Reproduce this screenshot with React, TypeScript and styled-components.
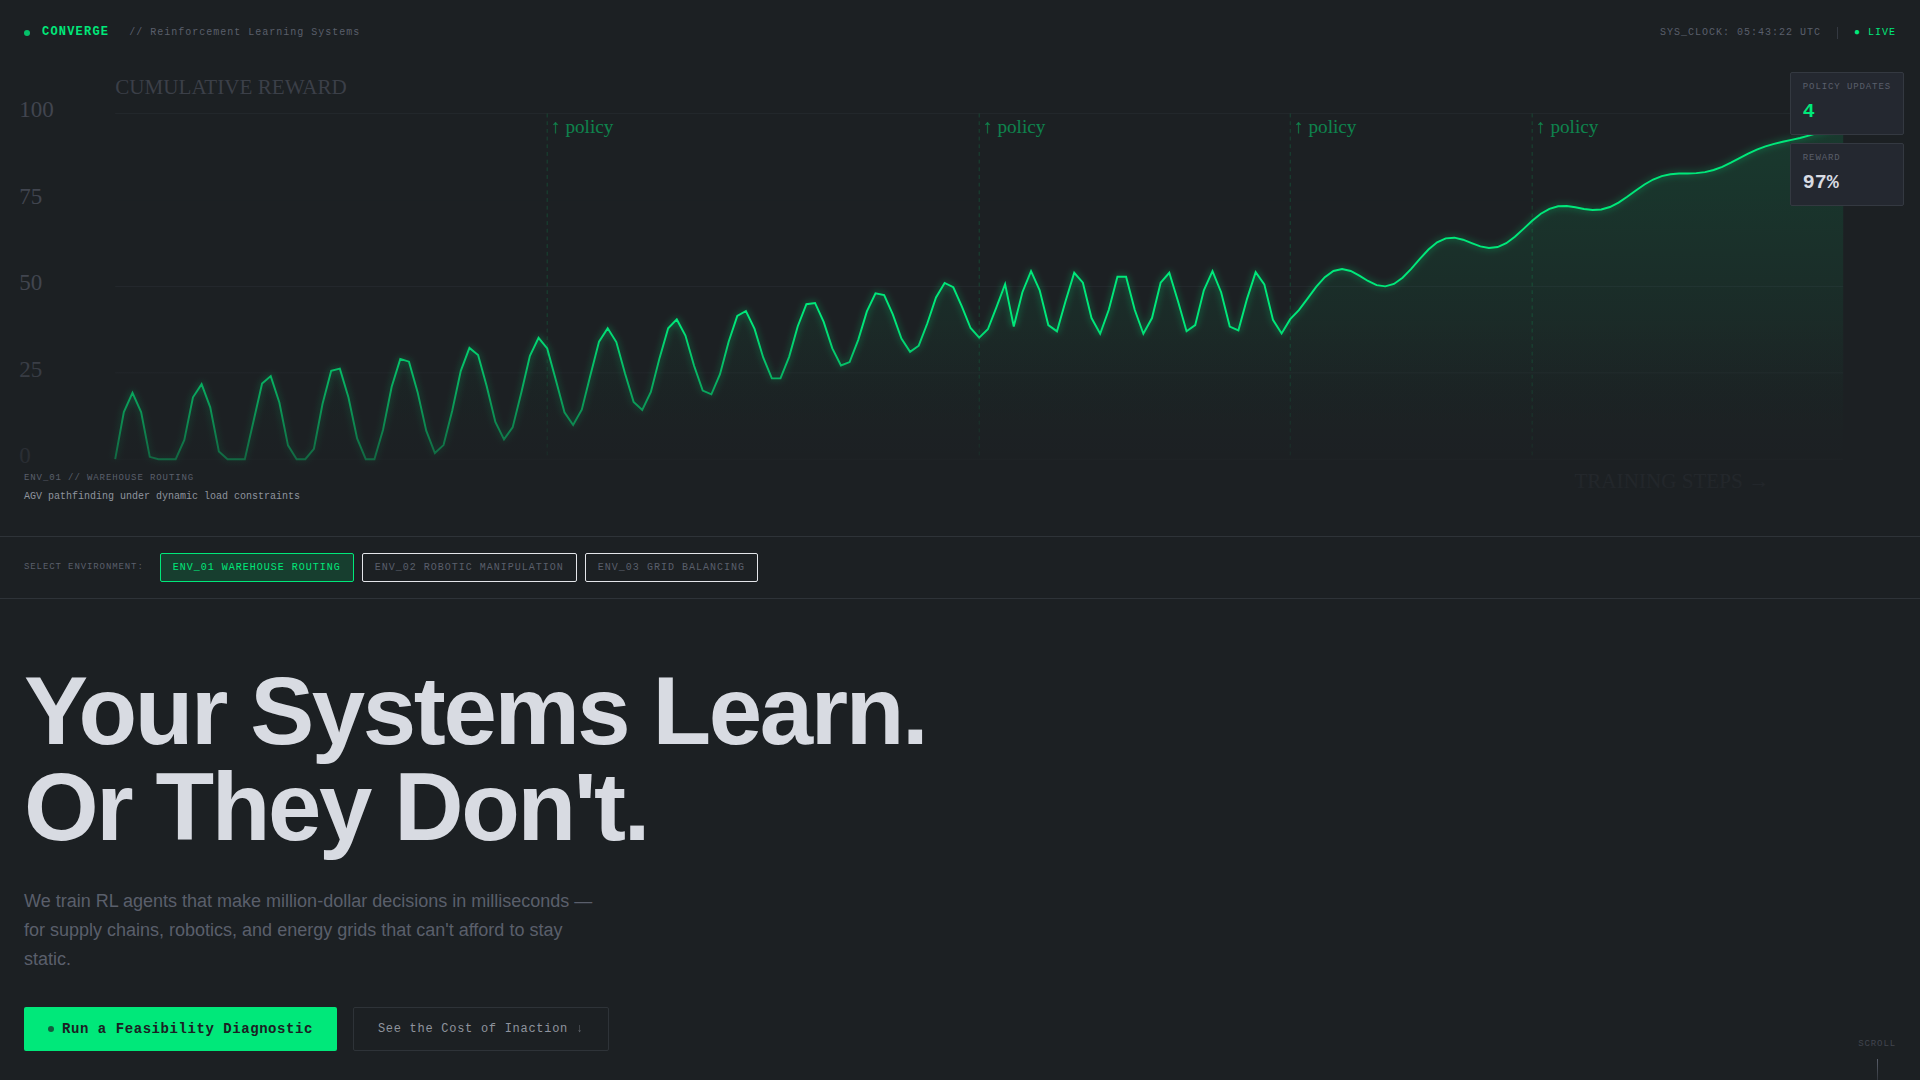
import React, { useState } from "react";
import styled, { createGlobalStyle, css } from "styled-components";

const colors = {
  bg: "#1c2023",
  panel: "#242830",
  line: "#2e3338",
  cardLine: "#343941",
  green: "#00e87a",
  text: "#d8dbe2",
  muted: "#5a5f6b",
  soft: "#8f949e",
  dim: "#41454f",
};

const mono = `"Liberation Mono", "DejaVu Sans Mono", monospace`;

const GlobalStyle = createGlobalStyle`
  *, *::before, *::after { box-sizing: border-box; }
  html, body { margin: 0; padding: 0; background: ${colors.bg}; }
  body {
    color: ${colors.text};
    font-family: "Liberation Sans", Arial, sans-serif;
  }
  h1, h2, p { margin: 0; }
`;

const Page = styled.div`
  height: 100vh;
  overflow: hidden;
  background: ${colors.bg};
`;

/* ---------- top bar ---------- */

const TopBar = styled.header`
  position: absolute;
  inset: 0 0 auto 0;
  z-index: 2;
  display: flex;
  align-items: center;
  justify-content: space-between;
  padding: 24px;
  font: 10px/17px ${mono};
  letter-spacing: 1px;
  color: ${colors.muted};
`;

const Brand = styled.div`
  display: flex;
  align-items: center;
  gap: 12px;
`;

const Dot = styled.span<{ $dark?: boolean }>`
  width: 6px;
  height: 6px;
  border-radius: 50%;
  background: ${(p) => (p.$dark ? colors.bg : colors.green)};
  opacity: ${(p) => (p.$dark ? 0.7 : 0.8)};
`;

const BrandName = styled.strong`
  font-size: 12px;
  font-weight: 700;
  letter-spacing: 0.1em;
  color: ${colors.green};
`;

const Tagline = styled.span`
  margin-left: 8px;
`;

const Status = styled.div`
  display: flex;
  align-items: center;
  gap: 16px;
`;

const Divider = styled.span`
  width: 1px;
  height: 12px;
  background: ${colors.cardLine};
`;

const Live = styled.span`
  color: ${colors.green};
`;

/* ---------- chart ---------- */

const ChartSection = styled.section`
  position: relative;
  aspect-ratio: 240 / 67;
  overflow: hidden;
`;

const ChartSvg = styled.svg`
  display: block;
  width: 100%;
  height: 100%;
  font-family: "Liberation Serif", "Times New Roman", serif;
`;

const ChartFade = styled.div`
  position: absolute;
  inset: auto 0 0 0;
  height: 40%;
  background: linear-gradient(to bottom, transparent, ${colors.bg});
`;

const Readouts = styled.div`
  position: absolute;
  top: 72px;
  right: 16px;
  display: flex;
  flex-direction: column;
  gap: 8px;
`;

const Card = styled.div`
  padding: 8px 12px;
  border: 1px solid ${colors.cardLine};
  border-radius: 2px;
  background: ${colors.panel};
  font-family: ${mono};
`;

const CardLabel = styled.div`
  margin-bottom: 4px;
  font-size: 9px;
  line-height: 12px;
  letter-spacing: 0.1em;
  color: ${colors.muted};
`;

const CardValue = styled.div<{ $accent?: boolean }>`
  font-size: 20px;
  line-height: 29px;
  font-weight: 700;
  color: ${(p) => (p.$accent ? colors.green : colors.text)};
`;

const EnvCaption = styled.div`
  position: absolute;
  left: 24px;
  bottom: 32px;
  font: 10px/14px ${mono};
  color: ${colors.soft};
`;

const EnvCode = styled.div`
  margin-bottom: 4px;
  font-size: 9px;
  line-height: 16px;
  letter-spacing: 0.1em;
  color: ${colors.muted};
`;

/* ---------- environment selector ---------- */

const Selector = styled.nav`
  display: flex;
  align-items: center;
  gap: 8px;
  padding: 16px 24px;
  border-top: 1px solid ${colors.line};
  border-bottom: 1px solid ${colors.line};
  font-family: ${mono};
`;

const SelectorLabel = styled.span`
  margin-right: 8px;
  font-size: 9px;
  line-height: 13px;
  letter-spacing: 0.1em;
  color: ${colors.muted};
`;

const Tab = styled.button<{ $active: boolean }>`
  padding: 8px 12px;
  border: 1px solid #e4e6ea;
  border-radius: 2px;
  background: transparent;
  color: ${colors.muted};
  font: 10px/11px ${mono};
  letter-spacing: 0.1em;
  cursor: pointer;
  ${(p) =>
    p.$active &&
    css`
      border-color: ${colors.green};
      background: rgba(0, 232, 122, 0.15);
      color: ${colors.green};
    `}
`;

/* ---------- hero ---------- */

const Hero = styled.section`
  position: relative;
  padding: 64px 24px;
`;

const Headline = styled.h1`
  margin-bottom: 32px;
  font-size: 96px;
  line-height: 96px;
  font-weight: 700;
  letter-spacing: -0.025em;
`;

const Lead = styled.p`
  max-width: 576px;
  min-height: 88px;
  margin-bottom: 32px;
  font-size: 18px;
  line-height: 29px;
  color: ${colors.muted};
`;

const Actions = styled.div`
  display: flex;
  gap: 16px;
`;

const Action = styled.a<{ $primary?: boolean }>`
  display: flex;
  align-items: center;
  gap: 8px;
  min-height: 44px;
  padding: 0 24px;
  border: 1px solid ${colors.line};
  border-radius: 2px;
  color: ${colors.soft};
  font: 12px/16px ${mono};
  letter-spacing: 0.06em;
  text-decoration: none;
  ${(p) =>
    p.$primary &&
    css`
      border: 0;
      background: ${colors.green};
      color: ${colors.bg};
      font-size: 14px;
      font-weight: 700;
      letter-spacing: 0.04em;
    `}
`;

const Arrow = styled.span`
  opacity: 0.6;
`;

const ScrollHint = styled.div`
  position: absolute;
  right: 24px;
  bottom: 24px;
  display: flex;
  flex-direction: column;
  align-items: center;
  gap: 8px;
  font: 9px/14px ${mono};
  letter-spacing: 0.1em;
  color: ${colors.dim};
`;

const ScrollLine = styled.span`
  width: 1px;
  height: 32px;
  background: linear-gradient(to bottom, ${colors.muted}, transparent);
`;

/* ---------- chart data ---------- */

const STEPS = 200;
const policySteps = [50, 100, 136, 164];

function reward(i: number): number {
  let v: number;
  if (i < 104) v = 0.438 * i + (18.5 - 0.098 * i) * Math.sin(0.8 * i);
  else if (i < 136) v = 45.3 + 9.1 * Math.sin(1.2 * i);
  else v = 52.3 + 0.806 * (i - 144.5) + Math.max(0, 5.5 - 0.086 * (i - 136)) * Math.sin(0.5 * i);
  return Math.max(0, Math.min(100, v));
}

const toX = (i: number) => 60 + (i * 900) / STEPS;
const toY = (v: number) => 240 - v * 1.8;

const curve = Array.from({ length: STEPS + 1 }, (_, i) => `${toX(i).toFixed(2)},${toY(reward(i)).toFixed(2)}`);
const linePath = `M${curve.join("L")}`;
const areaPath = `${linePath}L960,240L60,240Z`;

function RewardChart() {
  return (
    <ChartSvg viewBox="0 0 1000 280" preserveAspectRatio="xMidYMax slice" role="img" aria-label="Cumulative reward over training steps">
      <defs>
        <linearGradient id="area" x1="0" y1="0" x2="0" y2="1">
          <stop offset="0" stopColor={colors.green} stopOpacity="0.13" />
          <stop offset="1" stopColor={colors.green} stopOpacity="0" />
        </linearGradient>
        <filter id="glow" x="-5%" y="-10%" width="110%" height="120%">
          <feGaussianBlur stdDeviation="2" result="b" />
          <feComponentTransfer in="b" result="soft">
            <feFuncA type="linear" slope="0.6" />
          </feComponentTransfer>
          <feMerge>
            <feMergeNode in="soft" />
            <feMergeNode in="SourceGraphic" />
          </feMerge>
        </filter>
      </defs>
      {[0, 25, 50, 75, 100].map((v) => (
        <g key={v}>
          <line
            x1="60"
            x2="960"
            y1={toY(v)}
            y2={toY(v)}
            stroke={colors.line}
            strokeWidth="0.5"
            strokeOpacity={v === 75 ? 0.1 : 0.5}
          />
          <text x="10" y={toY(v) + 2} fontSize="12" fill={colors.dim}>
            {v}
          </text>
        </g>
      ))}
      <text x="60" y="50" fontSize="11" fill={colors.dim} fillOpacity="0.85">
        CUMULATIVE REWARD
      </text>
      <text x="820" y="255" fontSize="11" fill={colors.dim} fillOpacity="0.7">
        TRAINING STEPS →
      </text>
      {policySteps.map((s) => (
        <g key={s}>
          <line
            x1={toX(s)}
            x2={toX(s)}
            y1="60"
            y2="240"
            stroke={colors.green}
            strokeWidth="0.5"
            strokeDasharray="2 2"
            strokeOpacity="0.2"
          />
          <text x={toX(s) + 2} y="70" fontSize="10" fill={colors.green} fillOpacity="0.5">
            ↑ policy
          </text>
        </g>
      ))}
      <path d={areaPath} fill="url(#area)" />
      <path d={linePath} fill="none" stroke={colors.green} strokeWidth="1" filter="url(#glow)" />
    </ChartSvg>
  );
}

const environments = [
  { code: "ENV_01", name: "WAREHOUSE ROUTING" },
  { code: "ENV_02", name: "ROBOTIC MANIPULATION" },
  { code: "ENV_03", name: "GRID BALANCING" },
];

export default function App() {
  const [active, setActive] = useState("ENV_01");

  return (
    <Page>
      <GlobalStyle />
      <TopBar>
        <Brand>
          <Dot />
          <BrandName>CONVERGE</BrandName>
          <Tagline>// Reinforcement Learning Systems</Tagline>
        </Brand>
        <Status>
          <span>SYS_CLOCK: 05:43:22 UTC</span>
          <Divider />
          <Live>● LIVE</Live>
        </Status>
      </TopBar>

      <ChartSection>
        <RewardChart />
        <ChartFade />
        <Readouts>
          <Card>
            <CardLabel>POLICY UPDATES</CardLabel>
            <CardValue $accent>4</CardValue>
          </Card>
          <Card>
            <CardLabel>REWARD</CardLabel>
            <CardValue>97%</CardValue>
          </Card>
        </Readouts>
        <EnvCaption>
          <EnvCode>ENV_01 // WAREHOUSE ROUTING</EnvCode>
          AGV pathfinding under dynamic load constraints
        </EnvCaption>
      </ChartSection>

      <Selector aria-label="Environment">
        <SelectorLabel>SELECT ENVIRONMENT:</SelectorLabel>
        {environments.map((e) => (
          <Tab key={e.code} type="button" $active={e.code === active} aria-pressed={e.code === active} onClick={() => setActive(e.code)}>
            {e.code} {e.name}
          </Tab>
        ))}
      </Selector>

      <Hero>
        <Headline>
          Your Systems Learn.
          <br />
          Or They Don't.
        </Headline>
        <Lead>
          We train RL agents that make million-dollar decisions in milliseconds — for supply chains, robotics, and energy
          grids that can't afford to stay static.
        </Lead>
        <Actions>
          <Action href="#diagnostic" $primary>
            <Dot $dark />
            Run a Feasibility Diagnostic
          </Action>
          <Action href="#cost">
            <span>
              See the Cost of Inaction <Arrow>↓</Arrow>
            </span>
          </Action>
        </Actions>
        <ScrollHint>
          SCROLL
          <ScrollLine />
        </ScrollHint>
      </Hero>
    </Page>
  );
}
